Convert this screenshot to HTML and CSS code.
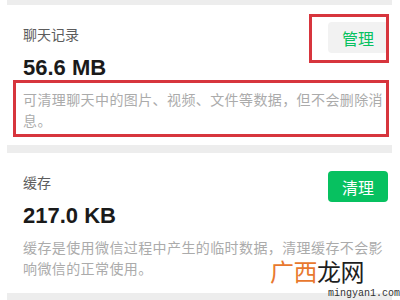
FILE: index.html
```html
<!DOCTYPE html>
<html lang="zh-CN">
<head>
    <meta charset="UTF-8">
    <meta name="viewport" content="width=device-width, initial-scale=1.0">
    <title>存储空间</title>
    <link rel="stylesheet" href="styles.css">
</head>
<body>
    <div class="screen">
        <div class="band band-top"></div>

        <div class="card">
            <div class="card-head">
                <div class="info">
                    <div class="label">聊天记录</div>
                    <div class="amount">56.6 MB</div>
                </div>
                <button class="btn btn-light">管理</button>
            </div>
            <p class="desc">可清理聊天中的图片、视频、文件等数据，但不会删除消息。</p>

            <!-- 标注框 -->
            <div class="mark mark-btn"></div>
            <div class="mark mark-desc"></div>
        </div>

        <div class="band band-mid"></div>

        <div class="card">
            <div class="card-head">
                <div class="info">
                    <div class="label">缓存</div>
                    <div class="amount">217.0 KB</div>
                </div>
                <button class="btn btn-green">清理</button>
            </div>
            <p class="desc">缓存是使用微信过程中产生的临时数据，清理缓存不会影响微信的正常使用。</p>
        </div>

        <div class="band band-bottom"></div>

        <div class="watermark">
            <div class="wm-name"><span class="wm-orange">广西</span>龙网</div>
            <div class="wm-url">mingyan1.com</div>
        </div>
    </div>
</body>
</html>
```

FILE: styles.css
```css
body {
    margin: 0;
    background: #fff;
    font-family: "Liberation Sans", "Noto Sans CJK SC", sans-serif;
}
.screen {
    position: relative;
    width: 400px;
    height: 300px;
    overflow: hidden;
}
.band {
    background: #ededed;
    margin: 0 8px 0 7px;
}
.band-top {
    height: 5px;
}
.band-mid {
    height: 8px;
}
.band-bottom {
    height: 8px;
}
.card {
    position: relative;
    background: #fff;
    padding: 17px 12px 12px 23px;
    height: 111px;
}
.card-head {
    display: flex;
    justify-content: space-between;
    align-items: flex-start;
}
.label {
    margin-top: 3px;
    font-size: 14px;
    line-height: 20px;
    color: #5c5c5c;
}
.amount {
    margin-top: 8px;
    font-family: "Liberation Sans", sans-serif;
    font-weight: bold;
    font-size: 22px;
    line-height: 30px;
    color: #1a1a1a;
}
.btn {
    width: 60px;
    height: 31px;
    border: none;
    border-radius: 4px;
    font-family: "Noto Sans CJK SC", sans-serif;
    font-size: 16px;
    padding: 0;
}
.btn-light {
    background: #f2f2f2;
    color: #07c160;
}
.btn-green {
    margin-top: 1px;
    background: #07c160;
    color: #fff;
}
.desc {
    width: 366px;
    margin: 6px 0 0;
    font-family: "Noto Sans CJK SC", sans-serif;
    font-size: 14px;
    line-height: 21px;
    letter-spacing: 0.4px;
    color: #ababab;
}
.mark {
    position: absolute;
    border: 3px solid #d7353d;
    box-sizing: border-box;
}
.mark-btn {
    top: 9px;
    left: 309px;
    width: 80px;
    height: 49px;
}
.mark-desc {
    top: 75px;
    left: 13px;
    width: 376px;
    height: 57px;
}
.watermark {
    position: absolute;
    left: 270px;
    top: 261px;
}
.wm-name {
    font-family: "Noto Sans CJK SC", sans-serif;
    font-size: 24px;
    line-height: 20px;
    letter-spacing: -0.5px;
    color: #1e1e1e;
}
.wm-orange {
    color: #e8782e;
}
.wm-url {
    margin: 7px 0 0 58px;
    font-family: "Liberation Mono", monospace;
    font-size: 10px;
    line-height: 12px;
    color: #333;
}
```
